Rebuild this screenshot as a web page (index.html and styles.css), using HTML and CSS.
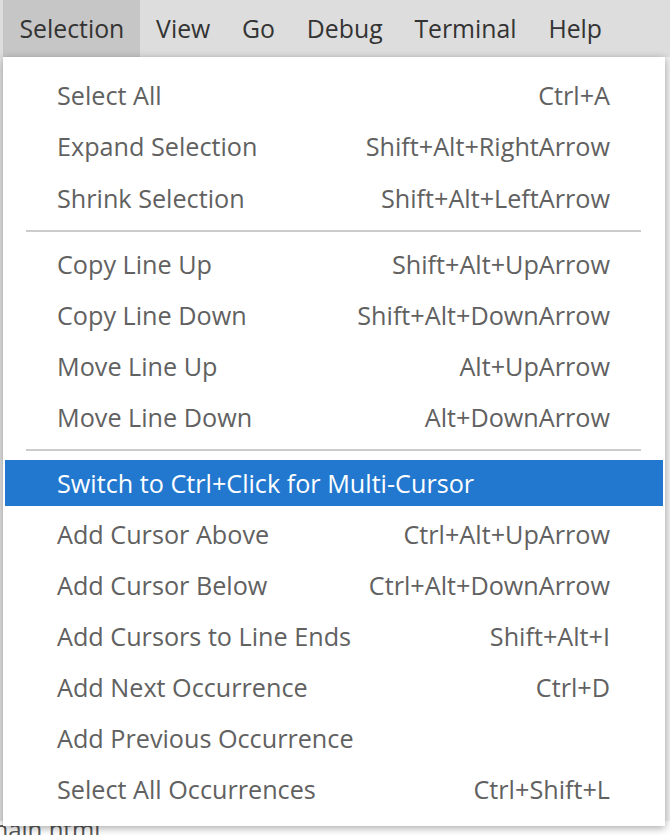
FILE: index.html
```html
<!DOCTYPE html>
<html>
<head>
<meta charset="utf-8">
<link rel="stylesheet" href="styles.css">
</head>
<body>
<div class="app">
  <div class="menubar">
    <div class="mb-item active">Selection</div>
    <div class="mb-item">View</div>
    <div class="mb-item">Go</div>
    <div class="mb-item">Debug</div>
    <div class="mb-item">Terminal</div>
    <div class="mb-item">Help</div>
  </div>
  <div class="editor">
    <div class="gutter"></div>
    <div class="code"></div>
    <div class="side"></div>
  </div>
  <div class="statusline">main.html</div>

  <div class="menu">
    <div class="item"><span class="label">Select All</span><span class="key">Ctrl+A</span></div>
    <div class="item"><span class="label">Expand Selection</span><span class="key">Shift+Alt+RightArrow</span></div>
    <div class="item"><span class="label">Shrink Selection</span><span class="key">Shift+Alt+LeftArrow</span></div>
    <div class="sep"></div>
    <div class="item"><span class="label">Copy Line Up</span><span class="key">Shift+Alt+UpArrow</span></div>
    <div class="item"><span class="label">Copy Line Down</span><span class="key">Shift+Alt+DownArrow</span></div>
    <div class="item"><span class="label">Move Line Up</span><span class="key">Alt+UpArrow</span></div>
    <div class="item"><span class="label">Move Line Down</span><span class="key">Alt+DownArrow</span></div>
    <div class="sep"></div>
    <div class="item selected"><span class="label">Switch to Ctrl+Click for Multi-Cursor</span><span class="key"></span></div>
    <div class="item"><span class="label">Add Cursor Above</span><span class="key">Ctrl+Alt+UpArrow</span></div>
    <div class="item"><span class="label">Add Cursor Below</span><span class="key">Ctrl+Alt+DownArrow</span></div>
    <div class="item"><span class="label">Add Cursors to Line Ends</span><span class="key">Shift+Alt+I</span></div>
    <div class="item"><span class="label">Add Next Occurrence</span><span class="key">Ctrl+D</span></div>
    <div class="item"><span class="label">Add Previous Occurrence</span><span class="key"></span></div>
    <div class="item"><span class="label">Select All Occurrences</span><span class="key">Ctrl+Shift+L</span></div>
  </div>
</div>
</body>
</html>
```

FILE: styles.css
```css
html, body {
  margin: 0;
  padding: 0;
}
body {
  width: 670px;
  height: 835px;
  overflow: hidden;
  background: #ffffff;
  font-family: "Open Sans", "Noto Sans", sans-serif;
}
.app {
  position: relative;
  width: 670px;
  height: 835px;
  display: flex;
  flex-direction: column;
}
.menubar {
  height: 57px;
  background: #dddddd;
  display: flex;
  align-items: stretch;
  padding-left: 3px;
  flex: none;
}
.mb-item {
  display: flex;
  align-items: center;
  padding: 0 15.3px 0 16.5px;
  font-size: 24.8px;
  color: #333333;
  padding-bottom: 1px;
}
.mb-item.active {
  background: #c6c6c6;
}
.editor {
  flex: 1;
  display: flex;
}
.gutter {
  width: 4px;
  background: #e4e4e4;
}
.code {
  flex: 1;
  background: #ffffff;
}
.side {
  width: 5px;
  background: #f0f0f0;
}
.statusline {
  height: 14px;
  font-size: 24px;
  line-height: 16px;
  color: #555;
  overflow: hidden;
  text-indent: -14px;
}
.menu {
  position: absolute;
  left: 3px;
  top: 57px;
  width: 662px;
  height: 769px;
  box-sizing: border-box;
  background: #ffffff;
  box-shadow: 0 2px 8px rgba(0, 0, 0, 0.35);
  display: flex;
  flex-direction: column;
  padding: 12.9px 0 10px 0;
}
.item {
  height: 46.7px;
  margin: 2.2px 2px;
  flex: none;
  display: flex;
  align-items: center;
  justify-content: space-between;
  padding: 0 53px 0 52px;
  font-size: 25.2px;
  color: #616161;
  white-space: nowrap;
}
.item.selected {
  background: #2277cf;
  color: #ffffff;
}
.sep {
  flex: none;
  height: 2px;
  background: #cccccc;
  margin: 6.8px 24px 6.3px 23px;
}
```
